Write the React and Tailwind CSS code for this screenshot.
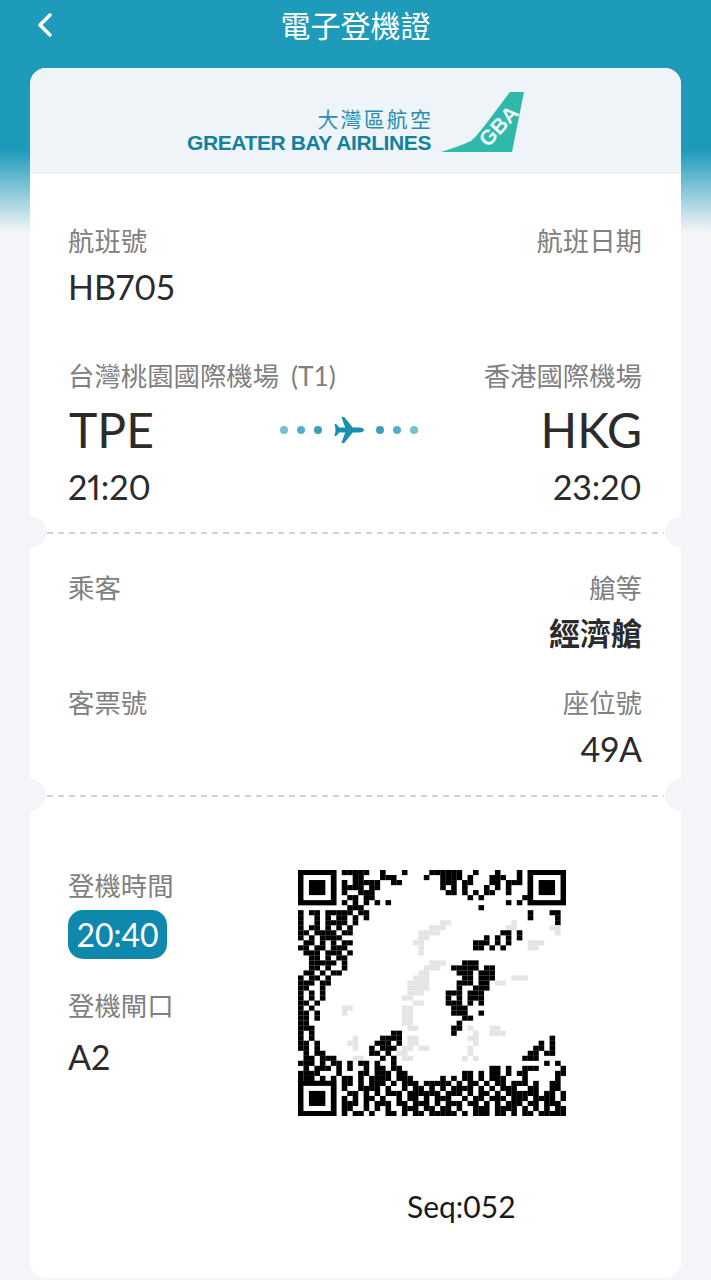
const FONT = { fontFamily: 'Lato, "Noto Sans CJK TC", sans-serif' };

// QR modules read off the screenshot; the middle was smudged out in the original
const QR_ROWS = [
  '#######.#####..#...#....######..#...#...#.#######',
  '#.....#...##...###.....#..####.#...###..#.#.....#',
  '#.###.#.#.#####..##.......###.##...##.###.#.###.#',
  '#.###.#.####.##...........#.#.#...#.#.#...#.###.#',
  '#.###.#.#..###.............##.#.#.##..#...#.###.#',
  '#.....#..##.##.................#.#.......##.....#',
  '#######.#.#.#.#.#.....................#.#.#######',
  '.........###.....................#...............',
  '#.##.#####.##.............................#...##.',
  '#..#.#.##.#.#.............................#....#.',
  '#..#.####.#...............oo...........o.......#.',
  '#.##.#.#.#..............ooo...........oo......oo.',
  '##.####.##............oooo...........##.#......o.',
  '#.#.####..............oo..........#.#.#.#.........',
  '.##.#.#.##...........oo.........###.#.#...ooo....',
  '##.##.###.............o.........##.#.#....oo.....o',
  '.###.###.#............o..........................',
  '..##.#.##.......................................',
  '..#####.#...............ooo...###...............',
  '..##.#..#..............ooo..#####.##............',
  '.##.#.##..............oo.....###.###............',
  '#.##.#...............ooo......##.###...ooo.......',
  '###.##..............oooo.....###.##.oo...........',
  '##..#...............oooo.....#..###..............',
  '#.#.#...............ooo....###.###...............',
  '#.#.#..............oo......#.#.###..............',
  '##.#.................oo....###.#.#..............',
  '#.#.....oo.........oo.......###.................',
  '##.#....o..........oo.......###..#..............',
  '##.#...............oo.........##................',
  '##.................oo........#..................',
  '###.................oo......##.o...oo...........',
  '#.#..............##.........#...o..ooo...........',
  '#.#.......o....####.oo.........oo.............#..',
  '##.#.....oo...###.#.oo..........o...........#.#..',
  '##.#......o..#.###.oo.oo.......o...........##.#..',
  '.#.##........##.#.oo...........o..........##.##..',
  '.##.###...oo...#.#.oo.........o.o........###.....',
  '###.#.##.#.##.#..#...........................#.#',
  '.#.###.#.#..#.##.##................##.#..###....#',
  '####...#...##.###.##..........##.#.##.#.##.....##',
  '###.#.#.##.#.####.###.....#.#.##.#.###...#.....#.',
  '#######.##.#.###.#.###.#####.#.##.#.##.###.#..##.',
  '#.....#.#..####.#..#.##.#.#.####.#.#.###..##..##.',
  '#.###.#..##.#.#.###.######.###.#.##.#.######.##.#',
  '#.###.#.#.#.##.#..#.##.#.###..#.##.###.###.####.#',
  '#.###.#.###.#.###.##.###.#.###.##.#.#.###.##.###.',
  '#.....#.##..#.#.#..###.##.##.#..###.####.#.#.#.##',
  '#######.#.##.#..##.#.##.#####.#.###.##.#.##.#####',
];

const FINDER_CORNERS = [[0, 0], [42, 0], [0, 42]];

function QrCode() {
  return (
    <svg width="268" height="246" viewBox="0 0 49 49" preserveAspectRatio="none" className="block blur-[0.5px]">
      {QR_ROWS.flatMap((row, y) =>
        row.slice(0, 49).split('').map((cell, x) =>
          cell === '.' ? null : (
            <rect key={`${x}-${y}`} x={x} y={y} width="1.02" height="1.02" fill={cell === '#' ? '#000' : '#e4e4e4'} />
          ),
        ),
      )}
      {FINDER_CORNERS.map(([x, y]) => (
        <g key={`${x}-${y}`}>
          <rect x={x} y={y} width="7" height="7" fill="#000" />
          <rect x={x + 1} y={y + 1} width="5" height="5" fill="#fff" />
          <rect x={x + 2} y={y + 2} width="3" height="3" fill="#000" />
        </g>
      ))}
    </svg>
  );
}

function Logo() {
  return (
    <div className="flex items-end gap-[10px]">
      <div className="flex flex-col items-end mb-[-4px]">
        <span className="text-[21px] leading-[26px] tracking-[2.1px] text-[#2a8fae] mr-[-2px] mb-[-1px]" style={{ fontFamily: '"Noto Sans CJK TC", sans-serif' }}>大灣區航空</span>
        <span className="text-[21px] leading-[26px] font-bold text-[#14809f] tracking-[-0.4px]" style={{ fontFamily: '"Liberation Sans", sans-serif' }}>GREATER BAY AIRLINES</span>
      </div>
      <svg width="83" height="60" viewBox="0 0 83 60" className="block">
        <path d="M0 60 C12 56 22 53 30 49 C38 43 58 14 69 0 L83 0 L71 60 Z" fill="#2fb9ab" />
        <text x="0" y="0" transform="translate(47 56) rotate(-47)" fill="#f1f7f8" fontSize="21" fontWeight="700" fontFamily="Liberation Sans, sans-serif">GBA</text>
      </svg>
    </div>
  );
}

function FlightPath() {
  const dots = ['bg-[#74c1cf]', 'bg-[#54b0c4]', 'bg-[#3ba0b9]'];
  return (
    <div className="flex items-center gap-[9px] ml-[3px]">
      {dots.map((c) => <span key={c} className={`w-[8px] h-[8px] rounded-full ${c}`} />)}
      <svg width="30" height="26" viewBox="0 0 30 26" className="mx-[3px]">
        <path d="M30 13c0-1.5-2-2.4-5-2.4h-6.2L10.2 0H7.4l3.8 10.6H5.4L2.2 7H.6l1 6-1 6h1.6l3.2-3.6h5.8L7.4 26h2.8l8.6-10.6H25c3 0 5-.9 5-2.4z" fill="#1b8fb0" />
      </svg>
      {[...dots].reverse().map((c) => <span key={c} className={`w-[8px] h-[8px] rounded-full ${c}`} />)}
    </div>
  );
}

function Label({ children, className = '' }) {
  return <div className={`text-[26.4px] leading-[36px] text-[#808080] ${className}`}>{children}</div>;
}

function Value({ children, className = '' }) {
  return <div className={`text-[34px] leading-[40px] text-[#2b2b2b] proportional-nums ${className}`}>{children}</div>;
}

function Notch({ side }) {
  return (
    <span className={`absolute top-[-16px] w-[32px] h-[32px] rounded-full bg-[#f3f5f8] ${side === 'left' ? 'left-[-16px]' : 'right-[-16px]'}`} />
  );
}

function Divider() {
  return (
    <div className="relative h-0">
      <Notch side="left" />
      <Notch side="right" />
      <div className="mx-[17px] -mt-px h-[2px] bg-[repeating-linear-gradient(to_right,#d2d2d2_0_6px,transparent_6px_11px)]" />
    </div>
  );
}

export default function App() {
  return (
    <div className="min-h-[1280px] bg-[linear-gradient(to_bottom,#1e9aba_150px,#f3f5f8_232px)]" style={FONT}>
      <header className="relative h-[68px] flex items-start justify-center">
        <svg className="absolute left-[36px] top-[11px]" width="18" height="28" viewBox="0 0 18 28" fill="none" stroke="#fff" strokeWidth="3.6" strokeLinecap="round" strokeLinejoin="round">
          <path d="M14 4 L4 14 L14 24" />
        </svg>
        <h1 className="text-[30px] leading-[50px] text-white font-normal">電子登機證</h1>
      </header>

      <main className="mx-[30px] h-[1210px] bg-white rounded-2xl overflow-hidden relative">
        <div className="h-[106px] bg-[#eef4f7] flex items-center justify-center pt-[1px] mb-0">
          <Logo />
        </div>

        <section className="pl-[38px] pr-[39px] pt-[49px] pb-[26px]">
          <div className="flex justify-between">
            <div>
              <Label>航班號</Label>
              <Value className="mt-[8px]">HB705</Value>
            </div>
            <Label>航班日期</Label>
          </div>
          <div className="flex justify-between mt-[51px]">
            <Label>台灣桃園國際機場 <span className="ml-[5px]">(T1)</span></Label>
            <Label>香港國際機場</Label>
          </div>
          <div className="flex justify-between items-center mt-[12px] h-[48px]">
            <span className="text-[48px] leading-[48px] text-[#2b2b2b] ml-[1px]">TPE</span>
            <FlightPath />
            <span className="text-[48px] leading-[48px] text-[#2b2b2b]">HKG</span>
          </div>
          <div className="flex justify-between mt-[13px]">
            <Value>21:20</Value>
            <Value>23:20</Value>
          </div>
        </section>

        <Divider />

        <section className="pl-[38px] pr-[39px] pt-[38px] pb-[27px]">
          <div className="flex justify-between">
            <Label>乘客</Label>
            <div className="text-right">
              <Label>艙等</Label>
              <div className="text-[31px] leading-[40px] font-bold text-[#2b2b2b] mt-[7px]">經濟艙</div>
            </div>
          </div>
          <div className="flex justify-between mt-[32px]">
            <Label>客票號</Label>
            <div className="text-right">
              <Label>座位號</Label>
              <Value className="mt-[8px]">49A</Value>
            </div>
          </div>
        </section>

        <Divider />

        <section className="pl-[38px] pt-[73px] flex">
          <div className="w-[230px]">
            <Label>登機時間</Label>
            <div className="mt-[6px] w-[99px] h-[49px] rounded-[15px] bg-[#0f88ae] text-white text-[32px] leading-[49px] text-center">20:40</div>
            <Label className="mt-[29px]">登機閘口</Label>
            <Value className="mt-[13px]">A2</Value>
          </div>
          <div className="pt-[2px]">
            <QrCode />
            <div className="text-[30px] leading-[40px] text-[#1a1a1a] mt-[70px] ml-[109px]">Seq:052</div>
          </div>
        </section>
      </main>
    </div>
  );
}
